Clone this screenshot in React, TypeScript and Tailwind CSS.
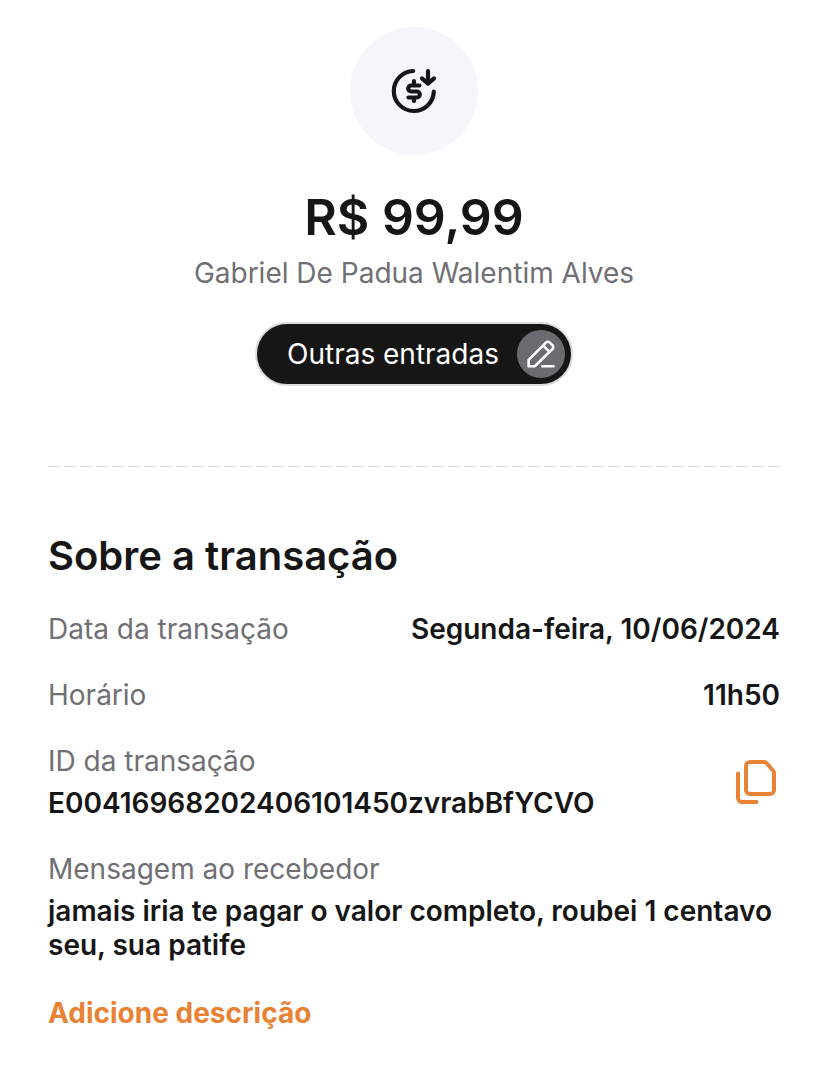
import type { ReactNode } from "react";

/** Incoming money: an open coin ring with an arrow dropping into the gap. */
function MoneyInIcon() {
  return (
    <svg
      aria-hidden="true"
      className="size-12"
      viewBox="0 0 48 48"
      fill="none"
      stroke="currentColor"
      strokeWidth="4.2"
      strokeLinecap="round"
      strokeLinejoin="round"
    >
      <path d="M23.2 4A20 20 0 1 0 43.8 24.6" />
      <path d="M38 4.2v12M32 11.4l6 5.2 6-5.2" />
      <path d="M29.4 18.5H21.2a3 3 0 0 0 0 6h5.6a3 3 0 0 1 0 6H18.4M24 14.2v4M24 30.8v3.2" />
    </svg>
  );
}

function PencilIcon() {
  return (
    <svg
      aria-hidden="true"
      className="size-8"
      viewBox="0 0 32 32"
      fill="none"
      stroke="currentColor"
      strokeWidth="2.6"
      strokeLinecap="round"
      strokeLinejoin="round"
    >
      <path d="M3.6 28.2v-6.4L21.2 4.4a2.4 2.4 0 0 1 3.4 0l3 3a2.4 2.4 0 0 1 0 3.4L9.8 28.2ZM18.2 7.6l6 6M17.2 28.2h11.4" />
    </svg>
  );
}

function CopyIcon() {
  return (
    <svg
      aria-hidden="true"
      className="size-12"
      viewBox="0 0 48 48"
      fill="none"
      stroke="currentColor"
      strokeWidth="4"
      strokeLinecap="round"
      strokeLinejoin="round"
    >
      <path d="M18 4h14.2a3 3 0 0 1 2.3 1l6.7 7.8a3 3 0 0 1 .8 2V32a4 4 0 0 1-4 4H18a4 4 0 0 1-4-4V8a4 4 0 0 1 4-4Z" />
      <path d="M6 15.5V40a4 4 0 0 0 4 4h14.5" />
    </svg>
  );
}

function InlineRow({ label, children }: { label: string; children: ReactNode }) {
  return (
    <div className="flex justify-between gap-4">
      <dt className="font-normal text-[#6f6f74]">{label}</dt>
      <dd className="text-right font-semibold">{children}</dd>
    </div>
  );
}

function StackedRow({ label, children }: { label: string; children: ReactNode }) {
  return (
    <div className="flex flex-col gap-2">
      <dt className="font-normal text-[#6f6f74]">{label}</dt>
      <dd className="font-semibold">{children}</dd>
    </div>
  );
}

export default function App() {
  return (
    <main className="bg-white px-12 pt-[27px] pb-11 font-['Inter',sans-serif] text-[28px] leading-[34px] text-[#161616]">
      <header className="flex flex-col items-center">
        <div className="flex size-32 items-center justify-center rounded-full bg-[#f4f6fa]">
          <MoneyInIcon />
        </div>
        <h1 className="mt-8 text-[50px] leading-[60px] font-semibold">R$ 99,99</h1>
        <p className="mt-[9px] font-normal text-[#6f6f74]">Gabriel De Padua Walentim Alves</p>
        <button
          type="button"
          className="mt-8 flex h-16 items-center gap-[18px] rounded-full border-2 border-[#dcdcdc] bg-[#161616] pr-1.5 pl-[30px] font-normal text-white"
        >
          Outras entradas
          <span className="flex size-12 items-center justify-center rounded-full bg-[#6b6b70]">
            <PencilIcon />
          </span>
        </button>
      </header>

      <div
        role="separator"
        className="mt-20 h-px bg-[repeating-linear-gradient(to_right,#dcdcdc_0_12px,transparent_12px_16px)]"
      />

      <section className="mt-[65px]">
        <h2 className="text-[40px] leading-12 font-semibold">Sobre a transação</h2>
        <dl className="mt-8 flex flex-col gap-8">
          <InlineRow label="Data da transação">Segunda-feira, 10/06/2024</InlineRow>
          <InlineRow label="Horário">11h50</InlineRow>
          <div className="flex items-center justify-between">
            <StackedRow label="ID da transação">E00416968202406101450zvrabBfYCVO</StackedRow>
            <button type="button" aria-label="Copiar ID da transação" className="text-[#e88235]">
              <CopyIcon />
            </button>
          </div>
          <StackedRow label="Mensagem ao recebedor">
            jamais iria te pagar o valor completo, roubei 1 centavo seu, sua patife
          </StackedRow>
        </dl>
        <a href="#descricao" className="mt-[34px] inline-block font-bold text-[#e88235]">
          Adicione descrição
        </a>
      </section>
    </main>
  );
}
